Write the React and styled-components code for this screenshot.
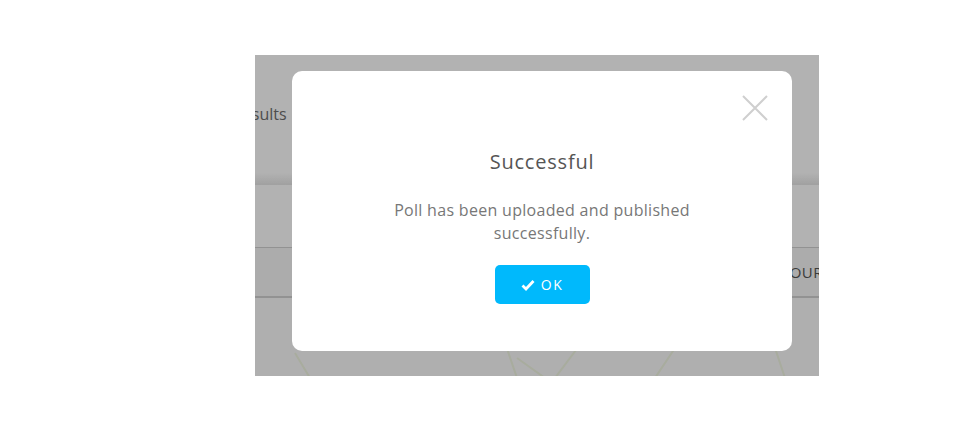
import styled, { createGlobalStyle } from 'styled-components';

const GlobalStyle = createGlobalStyle`
  html, body {
    margin: 0;
    padding: 0;
    background: #ffffff;
    font-family: "Open Sans", "Liberation Sans", sans-serif;
  }
`;

const Stage = styled.div`
  width: 961px;
  height: 426px;
  padding: 55px 0 0 255px;
  box-sizing: border-box;
`;

const Frame = styled.div`
  position: relative;
  width: 564px;
  height: 321px;
  overflow: hidden;
  background: #ffffff;
`;

const PageHeader = styled.div`
  height: 130px;
  display: flex;
  align-items: flex-start;
  padding-top: 48px;
  box-sizing: border-box;
  background: linear-gradient(to bottom, #ffffff 0, #ffffff 118px, #e6e6e6 130px);
`;

const Tab = styled.span`
  margin-left: -22px;
  font-size: 16px;
  color: #6f6f6f;
`;

const Row = styled.div`
  height: ${(p) => p.h}px;
  display: flex;
  align-items: center;
  justify-content: flex-end;
  box-sizing: border-box;
  background: ${(p) => p.bg};
  border-bottom: ${(p) => (p.border ? `${p.border}px solid #d2d2d2` : 'none')};
`;

const RowLabel = styled.span`
  margin-right: -4px;
  font-size: 15px;
  color: #555;
  letter-spacing: 0.5px;
`;

const Picture = styled.svg`
  display: block;
  width: 564px;
  height: 80px;
  background: #fbfbfb;
`;

const Overlay = styled.div`
  position: absolute;
  inset: 0;
  background: rgba(0, 0, 0, 0.3);
  padding: 16px 0 0 37px;
  box-sizing: border-box;
`;

const Modal = styled.div`
  position: relative;
  width: 500px;
  height: 280px;
  background: #ffffff;
  border-radius: 10px;
  display: flex;
  flex-direction: column;
  align-items: center;
  padding-top: 78px;
  box-sizing: border-box;
`;

const Close = styled.button`
  position: absolute;
  top: 24px;
  right: 24px;
  width: 26px;
  height: 26px;
  padding: 0;
  border: none;
  background: none;
  cursor: pointer;
`;

const Title = styled.h2`
  margin: 0;
  font-size: 20px;
  font-weight: 400;
  letter-spacing: 0.8px;
  color: #555;
  line-height: 26px;
`;

const Message = styled.p`
  margin: 24px 0 0;
  width: 360px;
  text-align: center;
  font-size: 16px;
  letter-spacing: 0.3px;
  line-height: 23px;
  color: #777;
`;

const OkButton = styled.button`
  margin-top: 20px;
  width: 95px;
  height: 39px;
  border: none;
  border-radius: 5px;
  background: #00b9fc;
  color: #ffffff;
  font-family: inherit;
  font-size: 14px;
  letter-spacing: 1.5px;
  display: flex;
  align-items: center;
  justify-content: center;
  gap: 6px;
  cursor: pointer;
`;

export default function App() {
  return (
    <Stage>
      <GlobalStyle />
      <Frame>
        <PageHeader>
          <Tab>Results</Tab>
        </PageHeader>
        <Row h={63} bg="#ffffff" border={1} />
        <Row h={50} bg="#f6f6f6" border={2}>
          <RowLabel>YOUR</RowLabel>
        </Row>
        <Picture viewBox="0 0 564 80">
          <g stroke="#f1f6e2" strokeWidth="2" fill="none">
            <path d="M245 30 L262 80" />
            <path d="M262 60 L290 80" />
            <path d="M330 40 L300 80" />
            <path d="M420 50 L400 80" />
            <path d="M520 50 L530 80" />
            <path d="M40 55 L55 80" />
          </g>
        </Picture>
        <Overlay>
          <Modal>
            <Close aria-label="close">
              <svg width="26" height="26" viewBox="0 0 26 26">
                <path d="M1 1 L25 25 M25 1 L1 25" stroke="#cfcfcf" strokeWidth="2" />
              </svg>
            </Close>
            <Title>Successful</Title>
            <Message>Poll has been uploaded and published successfully.</Message>
            <OkButton>
              <svg width="14" height="12" viewBox="0 0 14 12">
                <path d="M1.5 6.5 L5 10 L12.5 2" stroke="#fff" strokeWidth="2.8" fill="none" />
              </svg>
              OK
            </OkButton>
          </Modal>
        </Overlay>
      </Frame>
    </Stage>
  );
}
